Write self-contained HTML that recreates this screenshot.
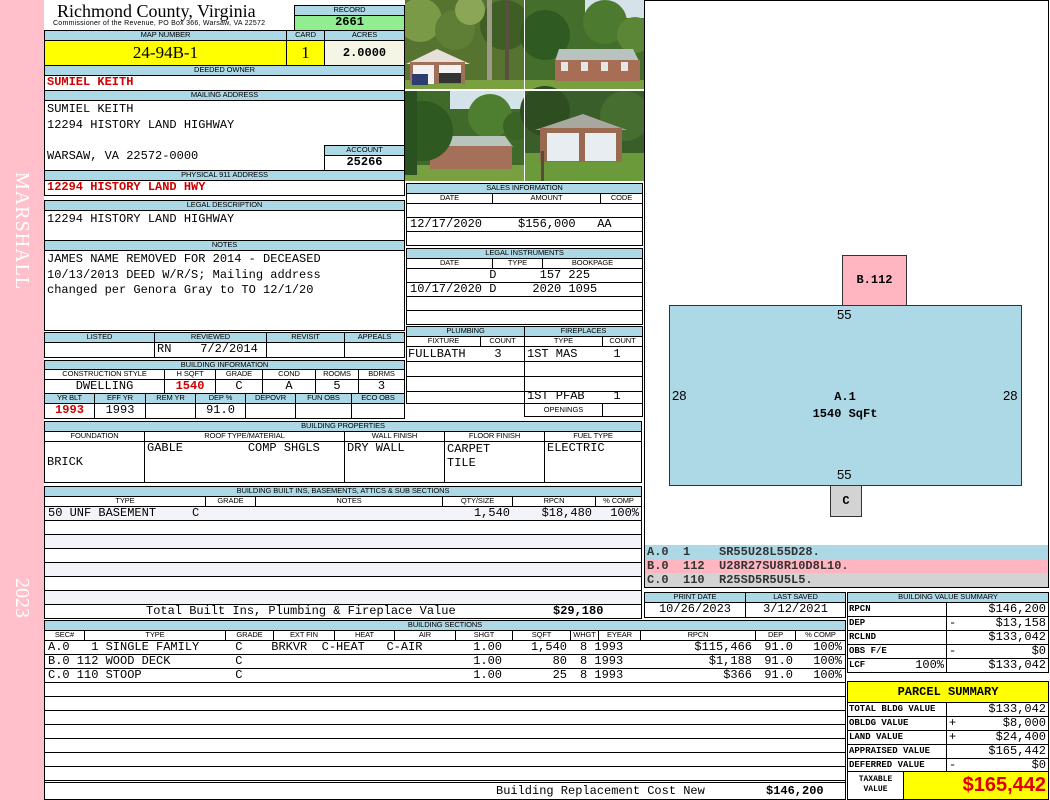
<!DOCTYPE html>
<html><head><meta charset="utf-8"><style>
body{margin:0;width:1050px;height:800px;position:relative;background:#fff;overflow:hidden;font-family:"Liberation Sans",sans-serif}
.a{position:absolute;box-sizing:border-box;overflow:hidden;white-space:pre}
.h{background:#add8e6;border:1px solid #000;font:7.5px/8px "Liberation Sans",sans-serif;text-align:center;color:#000;letter-spacing:-0.1px}
.w{background:#fff;border:1px solid #000;font:7.5px/8px "Liberation Sans",sans-serif;text-align:center;letter-spacing:-0.1px}
.m{border:1px solid #000;font:12px/13px "Liberation Mono",monospace;padding:0 2px}
.r{text-align:right}.c{text-align:center}
.red{color:#d00000;font-weight:bold}
</style></head><body>
<!-- sidebar -->
<div class="a" style="left:0;top:0;width:44px;height:800px;background:#ffc0cb"></div>
<div class="a" style="left:13px;top:172px;width:20px;height:140px;"><div style="transform:rotate(90deg);transform-origin:0 0;position:absolute;left:20px;top:0;font:20px 'Liberation Serif',serif;color:#fff;letter-spacing:1px">MARSHALL</div></div>
<div class="a" style="left:13px;top:578px;width:20px;height:50px;"><div style="transform:rotate(90deg);transform-origin:0 0;position:absolute;left:20px;top:0;font:20px 'Liberation Serif',serif;color:#fff">2023</div></div>

<!-- header -->
<div class="a" style="left:57px;top:1px;font:18px/20px 'Liberation Serif',serif">Richmond County, Virginia</div>
<div class="a" style="left:53px;top:19px;font:7px/9px 'Liberation Sans',sans-serif;letter-spacing:0.25px">Commissioner of the Revenue, PO Box 366, Warsaw, VA 22572</div>
<div class="a h" style="left:294px;top:5px;width:111px;height:11px">RECORD</div>
<div class="a m c" style="left:294px;top:15px;width:111px;height:16px;background:#90ee90;font-weight:bold">2661</div>
<div class="a h" style="left:44px;top:30px;width:243px;height:11px">MAP NUMBER</div>
<div class="a h" style="left:286px;top:30px;width:39px;height:11px">CARD</div>
<div class="a h" style="left:324px;top:30px;width:81px;height:11px">ACRES</div>
<div class="a c" style="left:44px;top:40px;width:243px;height:26px;border:1px solid #000;background:#ffff00;font:17px/24px 'Liberation Serif',serif">24-94B-1</div>
<div class="a c" style="left:286px;top:40px;width:39px;height:26px;border:1px solid #000;background:#ffff00;font:17px/24px 'Liberation Serif',serif">1</div>
<div class="a m c" style="left:324px;top:40px;width:81px;height:26px;background:#f5f5e6;font-weight:bold;line-height:24px">2.0000</div>
<div class="a h" style="left:44px;top:65px;width:361px;height:11px">DEEDED OWNER</div>
<div class="a m red" style="left:44px;top:75px;width:361px;height:16px">SUMIEL KEITH</div>
<div class="a h" style="left:44px;top:90px;width:361px;height:11px">MAILING ADDRESS</div>
<div class="a m" style="left:44px;top:100px;width:361px;height:71px;line-height:15.5px;padding-top:1px">SUMIEL KEITH
12294 HISTORY LAND HIGHWAY

WARSAW, VA 22572-0000</div>
<div class="a h" style="left:324px;top:145px;width:81px;height:11px">ACCOUNT</div>
<div class="a m c" style="left:324px;top:155px;width:81px;height:16px;font-weight:bold">25266</div>
<div class="a h" style="left:44px;top:170px;width:361px;height:11px">PHYSICAL 911 ADDRESS</div>
<div class="a m red" style="left:44px;top:180px;width:361px;height:16px">12294 HISTORY LAND HWY</div>
<div class="a h" style="left:44px;top:200px;width:361px;height:11px">LEGAL DESCRIPTION</div>
<div class="a m" style="left:44px;top:210px;width:361px;height:31px;padding-top:2px">12294 HISTORY LAND HIGHWAY</div>
<div class="a h" style="left:44px;top:240px;width:361px;height:11px">NOTES</div>
<div class="a m" style="left:44px;top:250px;width:361px;height:81px;line-height:15.5px;padding-top:1px">JAMES NAME REMOVED FOR 2014 - DECEASED
10/13/2013 DEED W/R/S; Mailing address
changed per Genora Gray to TO 12/1/20</div>

<!-- listed -->
<div class="a h" style="left:44px;top:332px;width:111px;height:11px">LISTED</div>
<div class="a h" style="left:154px;top:332px;width:113px;height:11px">REVIEWED</div>
<div class="a h" style="left:266px;top:332px;width:79px;height:11px">REVISIT</div>
<div class="a h" style="left:344px;top:332px;width:61px;height:11px">APPEALS</div>
<div class="a m" style="left:44px;top:342px;width:111px;height:16px"></div>
<div class="a m" style="left:154px;top:342px;width:113px;height:16px">RN    7/2/2014</div>
<div class="a m" style="left:266px;top:342px;width:79px;height:16px"></div>
<div class="a m" style="left:344px;top:342px;width:61px;height:16px"></div>
<!-- building info -->
<div class="a h" style="left:44px;top:360px;width:361px;height:10px">BUILDING INFORMATION</div>
<div class="a w" style="left:44px;top:369px;width:121px;height:11px">CONSTRUCTION STYLE</div>
<div class="a w" style="left:164px;top:369px;width:52px;height:11px">H SQFT</div>
<div class="a w" style="left:215px;top:369px;width:48px;height:11px">GRADE</div>
<div class="a w" style="left:262px;top:369px;width:54px;height:11px">COND</div>
<div class="a w" style="left:315px;top:369px;width:44px;height:11px">ROOMS</div>
<div class="a w" style="left:358px;top:369px;width:47px;height:11px">BDRMS</div>
<div class="a m c" style="left:44px;top:379px;width:121px;height:15px">DWELLING</div>
<div class="a m c red" style="left:164px;top:379px;width:52px;height:15px">1540</div>
<div class="a m c" style="left:215px;top:379px;width:48px;height:15px">C</div>
<div class="a m c" style="left:262px;top:379px;width:54px;height:15px">A</div>
<div class="a m c" style="left:315px;top:379px;width:44px;height:15px">5</div>
<div class="a m c" style="left:358px;top:379px;width:47px;height:15px">3</div>
<div class="a h" style="left:44px;top:393px;width:51px;height:11px">YR BLT</div>
<div class="a h" style="left:94px;top:393px;width:52px;height:11px">EFF YR</div>
<div class="a h" style="left:145px;top:393px;width:51px;height:11px">REM YR</div>
<div class="a h" style="left:195px;top:393px;width:51px;height:11px">DEP %</div>
<div class="a h" style="left:245px;top:393px;width:51px;height:11px">DEPOVR</div>
<div class="a h" style="left:295px;top:393px;width:57px;height:11px">FUN OBS</div>
<div class="a h" style="left:351px;top:393px;width:54px;height:11px">ECO OBS</div>
<div class="a m c red" style="left:44px;top:403px;width:51px;height:16px">1993</div>
<div class="a m c" style="left:94px;top:403px;width:52px;height:16px">1993</div>
<div class="a m" style="left:145px;top:403px;width:51px;height:16px"></div>
<div class="a m c" style="left:195px;top:403px;width:51px;height:16px">91.0</div>
<div class="a m" style="left:245px;top:403px;width:51px;height:16px"></div>
<div class="a m" style="left:295px;top:403px;width:57px;height:16px"></div>
<div class="a m" style="left:351px;top:403px;width:54px;height:16px"></div>

<!-- building properties -->
<div class="a h" style="left:44px;top:421px;width:598px;height:11px">BUILDING PROPERTIES</div>
<div class="a w" style="left:44px;top:431px;width:101px;height:11px">FOUNDATION</div>
<div class="a w" style="left:144px;top:431px;width:201px;height:11px">ROOF TYPE/MATERIAL</div>
<div class="a w" style="left:344px;top:431px;width:101px;height:11px">WALL FINISH</div>
<div class="a w" style="left:444px;top:431px;width:101px;height:11px">FLOOR FINISH</div>
<div class="a w" style="left:544px;top:431px;width:98px;height:11px">FUEL TYPE</div>
<div class="a m" style="left:44px;top:441px;width:101px;height:42px;padding-top:14px">BRICK</div>
<div class="a m" style="left:144px;top:441px;width:201px;height:42px;padding-top:0">GABLE         COMP SHGLS</div>
<div class="a m" style="left:344px;top:441px;width:101px;height:42px">DRY WALL</div>
<div class="a m" style="left:444px;top:441px;width:101px;height:42px;line-height:14px">CARPET
TILE</div>
<div class="a m" style="left:544px;top:441px;width:98px;height:42px">ELECTRIC</div>

<!-- built ins -->
<div class="a h" style="left:44px;top:486px;width:598px;height:11px">BUILDING BUILT INS, BASEMENTS, ATTICS &amp; SUB SECTIONS</div>
<div class="a w" style="left:44px;top:496px;width:162px;height:11px">TYPE</div>
<div class="a w" style="left:205px;top:496px;width:51px;height:11px">GRADE</div>
<div class="a w" style="left:255px;top:496px;width:188px;height:11px">NOTES</div>
<div class="a w" style="left:442px;top:496px;width:71px;height:11px">QTY/SIZE</div>
<div class="a w" style="left:512px;top:496px;width:84px;height:11px">RPCN</div>
<div class="a w" style="left:595px;top:496px;width:47px;height:11px">% COMP</div>
<div class="a" style="left:44px;top:506px;width:598px;height:113px;border:1px solid #000;background:repeating-linear-gradient(#f3f3fa 0 13px,#000 13px 14px,#fff 14px 27px,#000 27px 28px)"></div>
<div class="a" style="left:48px;top:506px;font:12px/14px 'Liberation Mono',monospace">50 UNF BASEMENT     C</div>
<div class="a r" style="left:440px;top:506px;width:70px;font:12px/14px 'Liberation Mono',monospace">1,540</div>
<div class="a r" style="left:510px;top:506px;width:82px;font:12px/14px 'Liberation Mono',monospace">$18,480</div>
<div class="a r" style="left:594px;top:506px;width:45px;font:12px/14px 'Liberation Mono',monospace">100%</div>
<div class="a m" style="left:44px;top:604px;width:598px;height:15px;background:#fff"></div>
<div class="a" style="left:146px;top:604px;font:12px/15px 'Liberation Mono',monospace">Total Built Ins, Plumbing &amp; Fireplace Value</div>
<div class="a" style="left:553px;top:604px;font:bold 12px/15px 'Liberation Mono',monospace">$29,180</div>

<!-- building sections -->
<div class="a h" style="left:44px;top:620px;width:802px;height:11px">BUILDING SECTIONS</div>
<div class="a w" style="left:44px;top:630px;width:41px;height:11px">SEC#</div>
<div class="a w" style="left:84px;top:630px;width:142px;height:11px">TYPE</div>
<div class="a w" style="left:225px;top:630px;width:49px;height:11px">GRADE</div>
<div class="a w" style="left:273px;top:630px;width:62px;height:11px">EXT FIN</div>
<div class="a w" style="left:334px;top:630px;width:61px;height:11px">HEAT</div>
<div class="a w" style="left:394px;top:630px;width:62px;height:11px">AIR</div>
<div class="a w" style="left:455px;top:630px;width:58px;height:11px">SHGT</div>
<div class="a w" style="left:512px;top:630px;width:59px;height:11px">SQFT</div>
<div class="a w" style="left:570px;top:630px;width:29px;height:11px">WHGT</div>
<div class="a w" style="left:598px;top:630px;width:43px;height:11px">EYEAR</div>
<div class="a w" style="left:640px;top:630px;width:116px;height:11px">RPCN</div>
<div class="a w" style="left:755px;top:630px;width:41px;height:11px">DEP</div>
<div class="a w" style="left:795px;top:630px;width:51px;height:11px">% COMP</div>
<div class="a" style="left:44px;top:640px;width:802px;height:160px;border:1px solid #000;background:repeating-linear-gradient(#fff 0 13px,#000 13px 14px)"></div>
<div class="a" style="left:48px;top:640px;font:12px/14px 'Liberation Mono',monospace">A.0   1 SINGLE FAMILY     C    BRKVR  C-HEAT   C-AIR
B.0 112 WOOD DECK         C
C.0 110 STOOP             C</div>
<div class="a r" style="left:455px;top:640px;width:47px;font:12px/14px 'Liberation Mono',monospace">1.00
1.00
1.00</div>
<div class="a r" style="left:512px;top:640px;width:55px;font:12px/14px 'Liberation Mono',monospace">1,540
80
25</div>
<div class="a" style="left:580px;top:640px;font:12px/14px 'Liberation Mono',monospace">8 1993
8 1993
8 1993</div>
<div class="a r" style="left:640px;top:640px;width:112px;font:12px/14px 'Liberation Mono',monospace">$115,466
$1,188
$366</div>
<div class="a r" style="left:755px;top:640px;width:38px;font:12px/14px 'Liberation Mono',monospace">91.0
91.0
91.0</div>
<div class="a r" style="left:795px;top:640px;width:47px;font:12px/14px 'Liberation Mono',monospace">100%
100%
100%</div>
<div class="a" style="left:44px;top:782px;width:802px;height:18px;border:1px solid #000;background:#fff"></div>
<div class="a" style="left:496px;top:784px;font:12px/15px 'Liberation Mono',monospace">Building Replacement Cost New</div>
<div class="a" style="left:766px;top:784px;font:bold 12px/15px 'Liberation Mono',monospace">$146,200</div>

<!-- photos -->
<svg class="a" style="left:405px;top:0" width="240" height="181" viewBox="0 0 240 181">
<rect width="240" height="181" fill="#fff"/>
<g>
<rect x="0" y="0" width="119" height="89" fill="#56732f"/>
<circle cx="15" cy="20" r="22" fill="#7a9a48"/><circle cx="50" cy="30" r="20" fill="#5e7f35"/><circle cx="100" cy="25" r="25" fill="#3f5e25"/><circle cx="65" cy="10" r="15" fill="#8aa656"/>
<rect x="82" y="0" width="5" height="85" fill="#a09a88"/><rect x="100" y="0" width="4" height="85" fill="#5a5040"/>
<rect x="0" y="80" width="119" height="9" fill="#7aa040"/>
<polygon points="1,64 32,49 65,64" fill="#e6e0d8"/><rect x="5" y="62" width="55" height="22" fill="#a07058"/><rect x="8" y="65" width="21" height="19" fill="#f2f2f2"/><rect x="34" y="65" width="22" height="8" fill="#f2f2f2"/><rect x="34" y="73" width="22" height="10" fill="#333"/><rect x="7" y="74" width="16" height="11" fill="#2c3e70"/>
</g>
<g transform="translate(120,0)">
<rect width="120" height="89" fill="#446e2c"/><rect x="60" y="0" width="60" height="18" fill="#d6e2ea"/>
<circle cx="20" cy="35" r="25" fill="#2f5a22"/><circle cx="80" cy="22" r="22" fill="#4c7a2e"/><circle cx="110" cy="35" r="18" fill="#5a8636"/>
<rect x="0" y="80" width="120" height="9" fill="#78a040"/>
<polygon points="34,49 108,49 114,61 30,61" fill="#b8c2be"/><rect x="30" y="60" width="85" height="21" fill="#a86e55"/>
<rect x="36" y="62" width="7" height="9" fill="#e6e6e6"/><rect x="56" y="62" width="7" height="9" fill="#e6e6e6"/><rect x="76" y="62" width="7" height="9" fill="#e6e6e6"/><rect x="96" y="62" width="7" height="9" fill="#e6e6e6"/>
</g>
<g transform="translate(0,91)">
<rect width="119" height="90" fill="#3f6a2a"/><rect x="45" y="0" width="74" height="18" fill="#d4e2ea"/>
<circle cx="85" cy="25" r="22" fill="#4e7e30"/><circle cx="112" cy="35" r="14" fill="#3a6426"/>
<rect x="0" y="74" width="119" height="16" fill="#78a040"/>
<polygon points="45,45 100,45 108,56 42,56" fill="#b8c4bc"/><rect x="25" y="55" width="82" height="23" fill="#a5705a"/>
<circle cx="18" cy="40" r="30" fill="#2e5a22"/><rect x="0" y="0" width="12" height="84" fill="#2a5220"/>
</g>
<g transform="translate(120,91)">
<rect width="120" height="90" fill="#3a5e2a"/><circle cx="20" cy="20" r="25" fill="#2e4e22"/><circle cx="100" cy="25" r="25" fill="#466e30"/>
<rect x="0" y="62" width="120" height="28" fill="#6a9a3a"/>
<polygon points="10,39 58,23 102,39" fill="#a8a8a0"/><rect x="15" y="37" width="82" height="34" fill="#9a6a50"/><rect x="22" y="42" width="32" height="28" fill="#e8edf2"/><rect x="60" y="42" width="31" height="28" fill="#e8edf2"/>
<rect x="16" y="60" width="3" height="30" fill="#5a4a38"/>
</g>
<line x1="119.5" y1="0" x2="119.5" y2="181" stroke="#fff"/><line x1="0" y1="90" x2="240" y2="90" stroke="#fff" stroke-width="2"/>
</svg>

<!-- sales -->
<div class="a h" style="left:406px;top:183px;width:237px;height:11px">SALES INFORMATION</div>
<div class="a w" style="left:406px;top:193px;width:87px;height:11px">DATE</div>
<div class="a w" style="left:492px;top:193px;width:109px;height:11px">AMOUNT</div>
<div class="a w" style="left:600px;top:193px;width:43px;height:11px">CODE</div>
<div class="a" style="left:406px;top:203px;width:237px;height:43px;border:1px solid #000;background:repeating-linear-gradient(#fff 0 13px,#000 13px 14px)"></div>
<div class="a" style="left:410px;top:217px;font:12px/14px 'Liberation Mono',monospace">12/17/2020     $156,000   AA</div>
<div class="a h" style="left:406px;top:248px;width:237px;height:11px">LEGAL INSTRUMENTS</div>
<div class="a w" style="left:406px;top:258px;width:87px;height:11px">DATE</div>
<div class="a w" style="left:492px;top:258px;width:51px;height:11px">TYPE</div>
<div class="a w" style="left:542px;top:258px;width:101px;height:11px">BOOKPAGE</div>
<div class="a" style="left:406px;top:268px;width:237px;height:57px;border:1px solid #000;background:repeating-linear-gradient(#fff 0 13px,#000 13px 14px)"></div>
<div class="a" style="left:410px;top:268px;font:12px/14px 'Liberation Mono',monospace">           D      157 225
10/17/2020 D     2020 1095</div>
<!-- plumbing -->
<div class="a h" style="left:406px;top:326px;width:119px;height:11px">PLUMBING</div>
<div class="a h" style="left:524px;top:326px;width:119px;height:11px">FIREPLACES</div>
<div class="a w" style="left:406px;top:336px;width:75px;height:11px">FIXTURE</div>
<div class="a w" style="left:480px;top:336px;width:45px;height:11px">COUNT</div>
<div class="a w" style="left:524px;top:336px;width:79px;height:11px">TYPE</div>
<div class="a w" style="left:602px;top:336px;width:41px;height:11px">COUNT</div>
<div class="a" style="left:406px;top:346px;width:119px;height:58px;border:1px solid #000;background:repeating-linear-gradient(#fff 0 14px,#000 14px 15px)"></div>
<div class="a" style="left:524px;top:346px;width:119px;height:58px;border:1px solid #000;background:repeating-linear-gradient(#fff 0 14px,#000 14px 15px)"></div>
<div class="a" style="left:524px;top:403px;width:79px;height:14px;border:1px solid #000;font:7.5px/12px 'Liberation Sans';text-align:center">OPENINGS</div>
<div class="a" style="left:602px;top:403px;width:41px;height:14px;border:1px solid #000"></div>
<div class="a" style="left:408px;top:347px;font:12px/14px 'Liberation Mono',monospace">FULLBATH    3</div>
<div class="a" style="left:527px;top:347px;font:12px/14px 'Liberation Mono',monospace">1ST MAS     1</div>
<div class="a" style="left:527px;top:389px;font:12px/14px 'Liberation Mono',monospace">1ST PFAB    1</div>

<!-- sketch -->
<div class="a" style="left:644px;top:0;width:405px;height:546px;border:1px solid #000"></div>
<div class="a c" style="left:842px;top:255px;width:65px;height:51px;background:#ffb6c1;border:1px solid #333;font:bold 12px/48px 'Liberation Mono',monospace">B.112</div>
<div class="a" style="left:669px;top:305px;width:353px;height:181px;background:#add8e6;border:1px solid #333"></div>
<div class="a c" style="left:830px;top:485px;width:32px;height:32px;background:#d3d3d3;border:1px solid #333;font:bold 12px/30px 'Liberation Mono',monospace">C</div>
<div class="a" style="left:837px;top:307px;font:13px 'Liberation Sans'">55</div>
<div class="a" style="left:837px;top:467px;font:13px 'Liberation Sans'">55</div>
<div class="a" style="left:672px;top:388px;font:13px 'Liberation Sans'">28</div>
<div class="a" style="left:1003px;top:388px;font:13px 'Liberation Sans'">28</div>
<div class="a c" style="left:745px;top:389px;width:200px;font:bold 12px/17px 'Liberation Mono',monospace">A.1
1540 SqFt</div>
<div class="a" style="left:644px;top:545px;width:405px;height:14px;background:#add8e6;border-left:1px solid #000;border-right:1px solid #000;font:bold 12px/14px 'Liberation Mono',monospace;color:#333;padding-left:2px">A.0  1    SR55U28L55D28.</div>
<div class="a" style="left:644px;top:559px;width:405px;height:14px;background:#ffb6c1;border-left:1px solid #000;border-right:1px solid #000;font:bold 12px/14px 'Liberation Mono',monospace;color:#333;padding-left:2px">B.0  112  U28R27SU8R10D8L10.</div>
<div class="a" style="left:644px;top:573px;width:405px;height:15px;background:#d3d3d3;border:1px solid #000;border-top:none;font:bold 12px/14px 'Liberation Mono',monospace;color:#333;padding-left:2px">C.0  110  R25SD5R5U5L5.</div>

<!-- print date -->
<div class="a h" style="left:644px;top:592px;width:102px;height:11px">PRINT DATE</div>
<div class="a h" style="left:745px;top:592px;width:101px;height:11px">LAST SAVED</div>
<div class="a m c" style="left:644px;top:602px;width:102px;height:16px">10/26/2023</div>
<div class="a m c" style="left:745px;top:602px;width:101px;height:16px">3/12/2021</div>

<!-- building value summary -->
<div class="a h" style="left:847px;top:592px;width:202px;height:11px">BUILDING VALUE SUMMARY</div>
<div class="a" style="left:847px;top:602px;width:100px;height:71px;border:1px solid #000;background:repeating-linear-gradient(#fff 0 13px,#000 13px 14px)"></div>
<div class="a" style="left:946px;top:602px;width:103px;height:71px;border:1px solid #000;background:repeating-linear-gradient(#fff 0 13px,#000 13px 14px)"></div>
<div class="a" style="left:849px;top:602px;font:bold 9px/14px 'Liberation Mono',monospace">RPCN
DEP
RCLND
OBS F/E
LCF</div>
<div class="a r" style="left:880px;top:658px;width:64px;font:12px/14px 'Liberation Mono',monospace">100%</div>
<div class="a" style="left:949px;top:602px;font:12px/14px 'Liberation Mono',monospace">
-

-</div>
<div class="a r" style="left:950px;top:602px;width:96px;font:12px/14px 'Liberation Mono',monospace">$146,200
$13,158
$133,042
$0
$133,042</div>

<!-- parcel summary -->
<div class="a c" style="left:847px;top:681px;width:202px;height:22px;background:#ffff00;border:1px solid #000;font:bold 12px/20px 'Liberation Mono',monospace">PARCEL SUMMARY</div>
<div class="a" style="left:847px;top:702px;width:100px;height:70px;border:1px solid #000;background:repeating-linear-gradient(#fff 0 13px,#000 13px 14px)"></div>
<div class="a" style="left:946px;top:702px;width:103px;height:70px;border:1px solid #000;background:repeating-linear-gradient(#fff 0 13px,#000 13px 14px)"></div>
<div class="a" style="left:849px;top:702px;font:bold 9px/14px 'Liberation Mono',monospace">TOTAL BLDG VALUE
OBLDG VALUE
LAND VALUE
APPRAISED VALUE
DEFERRED VALUE</div>
<div class="a" style="left:949px;top:702px;font:12px/14px 'Liberation Mono',monospace">
+
+

-</div>
<div class="a r" style="left:950px;top:702px;width:96px;font:12px/14px 'Liberation Mono',monospace">$133,042
$8,000
$24,400
$165,442
$0</div>
<div class="a" style="left:847px;top:771px;width:57px;height:29px;border:1px solid #000;font:bold 8px/10px 'Liberation Mono',monospace;text-align:center;padding-top:3px">TAXABLE
VALUE</div>
<div class="a r" style="left:903px;top:771px;width:146px;height:29px;border:1px solid #000;background:#ffff00;color:#e00000;font:bold 20px/27px 'Liberation Sans',sans-serif;padding-right:2px">$165,442</div>
</body></html>
